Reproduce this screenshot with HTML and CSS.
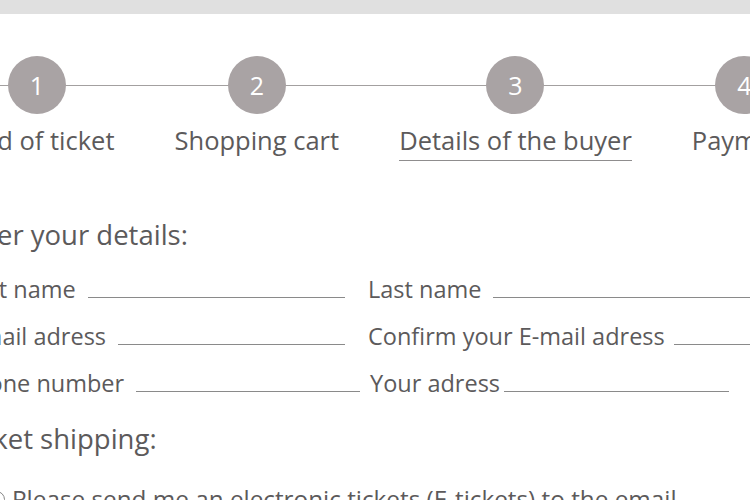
FILE: index.html
```html
<!DOCTYPE html>
<html>
<head>
<meta charset="utf-8">
<link rel="stylesheet" href="styles.css">
</head>
<body>
<div class="topbar"></div>
<div class="stepper">
  <div class="step"><div class="circle">1</div><div class="label">Kind of ticket</div></div>
  <div class="step"><div class="circle">2</div><div class="label">Shopping cart</div></div>
  <div class="step active"><div class="circle">3</div><div class="label">Details of the buyer</div></div>
  <div class="step"><div class="circle">4</div><div class="label">Payment</div></div>
</div>
<div class="content">
  <h2 class="heading">Enter your details:</h2>
  <div class="row">
    <div class="field f1"><span class="flabel">First name</span><span class="line"></span></div>
    <div class="field f2"><span class="flabel">Last name</span><span class="line"></span></div>
  </div>
  <div class="row">
    <div class="field f3"><span class="flabel">E-mail adress</span><span class="line"></span></div>
    <div class="field f4"><span class="flabel">Confirm your E-mail adress</span><span class="line"></span></div>
  </div>
  <div class="row">
    <div class="field f5"><span class="flabel">Phone number</span><span class="line"></span></div>
    <div class="field f6"><span class="flabel">Your adress</span><span class="line"></span></div>
  </div>
  <h2 class="heading ship">Ticket shipping:</h2>
  <div class="option"><span class="radio"></span><span class="otext">Please send me an electronic tickets (E-tickets) to the email</span></div>
</div>
</body>
</html>
```
FILE: styles.css
```css
html, body {
  margin: 0;
  padding: 0;
  background: #ffffff;
  overflow: hidden;
  width: 750px;
  height: 500px;
}
body {
  font-family: "Open Sans", "Noto Sans", sans-serif;
  color: #5c5a5b;
}
.topbar {
  height: 14px;
  background: #e0e0e0;
}
.stepper {
  position: relative;
  display: flex;
  gap: 60px;
  margin-left: -40.5px;
  margin-top: 42px;
  white-space: nowrap;
}
.stepper::before {
  content: "";
  position: absolute;
  left: 0;
  right: -400px;
  top: 29px;
  height: 1px;
  background: #a3a0a0;
}
.step {
  position: relative;
  flex: none;
  display: flex;
  flex-direction: column;
  align-items: center;
}
.circle {
  width: 58px;
  height: 58px;
  border-radius: 50%;
  background: #a9a3a4;
  color: #ffffff;
  font-size: 25px;
  line-height: 58px;
  text-align: center;
}
.label {
  margin-top: 9px;
  font-size: 25.5px;
  line-height: 34px;
  padding-bottom: 3px;
}
.step.active .label {
  border-bottom: 1px solid #8f8d8e;
}
.content {
  margin-left: -40px;
}
.heading {
  font-weight: 400;
  font-size: 27.5px;
  margin: 56px 0 0 -5px;
  line-height: 36px;
  white-space: nowrap;
}
.row {
  display: flex;
  height: 47px;
  align-items: flex-start;
}
.heading + .row {
  margin-top: 21px;
}
.field {
  flex: none;
  display: flex;
  align-items: baseline;
}
.flabel {
  font-size: 23.5px;
  line-height: 30px;
  white-space: nowrap;
}
.line {
  display: inline-block;
  border-bottom: 1px solid #8a8a8a;
  height: 0;
  flex: 1;
  margin-left: 12px;
}
.f1 { width: 385px; }
.f2 { margin-left: 23px; width: 420px; }
.f3 { width: 385px; }
.f4 { margin-left: 23px; width: 420px; }
.f4 .line { margin-left: 9px; }
.f5 { width: 400px; }
.f6 { margin-left: 10px; width: 359px; }
.f6 .line { margin-left: 4px; }
.ship {
  margin-top: 6px;
  margin-left: -2px;
}
.option {
  display: flex;
  align-items: center;
  margin-top: 25px;
  font-size: 24.3px;
  line-height: 34px;
  white-space: nowrap;
}
.radio {
  flex: none;
  width: 15px;
  height: 15px;
  border: 1px solid #888;
  border-radius: 50%;
  margin-left: 28px;
  margin-right: 7px;
}
```
